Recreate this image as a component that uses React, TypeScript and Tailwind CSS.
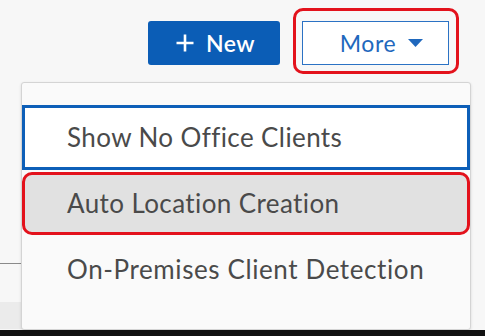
import React from "react";

export default function App() {
  return (
    <div
      className="relative w-[485px] h-[336px] overflow-hidden bg-[#f7f7f7]"
      style={{ fontFamily: "Lato, 'Open Sans', sans-serif" }}
    >
      <div className="flex flex-col h-full">
        <div className="h-[74px] pt-[21px]">
          <div className="flex justify-end gap-[22px] pr-[36px]">
            <button className="flex h-[44px] w-[132px] items-center justify-center gap-[11px] rounded-[3px] bg-[#0b5db6] text-white">
              <svg width="20" height="20" viewBox="0 0 20 20" className="ml-[2px]">
                <path d="M10 1.5v17M1.5 10h17" stroke="white" strokeWidth="2.6" />
              </svg>
              <span className="text-[23px] font-semibold leading-none tracking-[0.5px]">New</span>
            </button>
            <div className="relative">
              <button className="flex h-[44px] w-[147px] items-center justify-center gap-[12px] border border-[#2b72c4] bg-white pl-[12px] text-[#1f68bd]">
                <span className="text-[23px] leading-none tracking-[0.6px]">More</span>
                <svg width="15" height="8" viewBox="0 0 15 8">
                  <path d="M0 0h15L7.5 8z" fill="#1f68bd" />
                </svg>
              </button>
              <div className="pointer-events-none absolute -left-[9px] -right-[10px] -top-[13px] -bottom-[9px] rounded-[10px] border-[3px] border-[#e3121c]" />
            </div>
          </div>
        </div>
        <div className="flex-1 w-[200px]">
          <div className="h-[190px] border-b border-[#8a8a8a]" />
          <div className="h-[38px]" />
          <div className="h-[27px] bg-[#ebebeb]" />
        </div>
        <div className="h-[6px] bg-[#111]" />
      </div>

      <div className="absolute left-[21px] top-[82px] w-[450px] h-[248px] rounded-[3px] border border-[#d4d4d4] bg-[#fafafa] pt-[22px] shadow-[0_1px_3px_rgba(0,0,0,0.12)]">
        <div className="flex h-[65px] items-center border-[3px] border-[#0d5fb8] bg-white pl-[42px] text-[26px] tracking-[0.4px] text-[#4a4a4a]">
          Show No Office Clients
        </div>
        <div className="mt-[2px] flex h-[63px] items-center rounded-[10px] border-[3px] border-[#e3121c] bg-[#e1e1e1] pl-[42px] text-[26px] tracking-[0.4px] text-[#4a4a4a]">
          Auto Location Creation
        </div>
        <div className="flex h-[68px] items-center pl-[45px] text-[26px] tracking-[0.6px] text-[#4a4a4a]">
          On-Premises Client Detection
        </div>
      </div>
    </div>
  );
}
